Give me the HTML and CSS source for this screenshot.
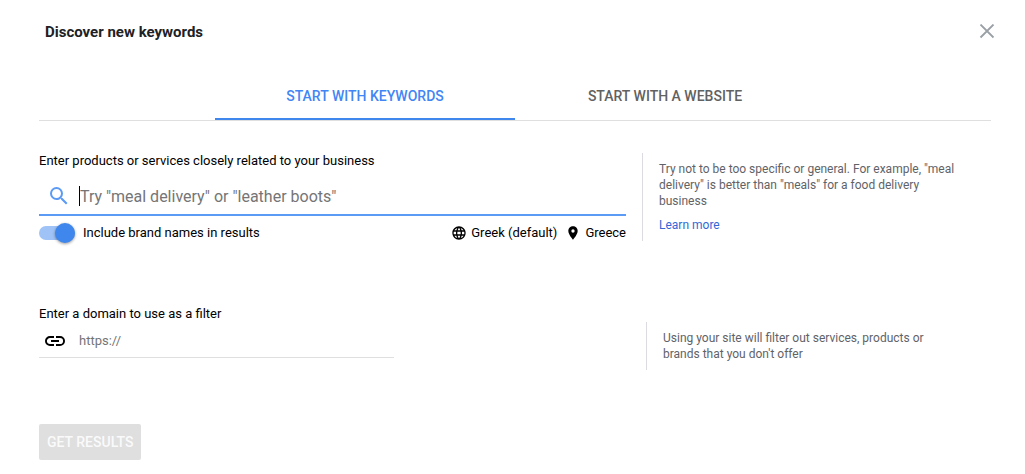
FILE: index.html
```html
<!DOCTYPE html>
<html lang="en">

<head>
    <meta charset="UTF-8">
    <meta name="viewport" content="width=device-width, initial-scale=1.0">
    <title>Discover new keywords</title>
    <link rel="stylesheet" href="styles.css">
</head>

<body>
    <header class="header">
        <h1 class="title">Discover new keywords</h1>
        <button class="close" type="button" aria-label="Close">
            <svg width="16" height="16" viewBox="0 0 16 16"><path d="M1.5 .5l13 13M14.5 .5l-13 13" fill="none" stroke="#9aa0a6" stroke-width="1.8"/></svg>
        </button>
    </header>

    <nav class="tabs" role="tablist">
        <button class="tab active" type="button" role="tab" aria-selected="true">START WITH KEYWORDS</button>
        <button class="tab" type="button" role="tab" aria-selected="false">START WITH A WEBSITE</button>
    </nav>

    <form class="form">
        <section class="row">
            <div class="main">
                <label class="label" for="keywords">Enter products or services closely related to your business</label>
                <div class="field search">
                    <svg class="search-icon" width="24" height="24" viewBox="0 0 24 24" fill="#5b9af5"><path d="M15.5 14h-.79l-.28-.27A6.471 6.471 0 0 0 16 9.5 6.5 6.5 0 1 0 9.5 16c1.61 0 3.09-.59 4.23-1.57l.27.28v.79l5 4.99L20.49 19l-4.99-5zm-6 0C7.01 14 5 11.99 5 9.5S7.01 5 9.5 5 14 7.01 14 9.5 11.99 14 9.5 14z"/></svg>
                    <span class="caret"></span>
                    <input id="keywords" type="text" placeholder="Try &quot;meal delivery&quot; or &quot;leather boots&quot;">
                </div>
                <div class="options">
                    <label class="brands"><input class="switch" type="checkbox" checked>Include brand names in results</label>
                    <button class="option" type="button">
                        <svg width="16" height="16" viewBox="0 0 24 24"><path d="M11.99 2C6.47 2 2 6.48 2 12s4.47 10 9.99 10C17.52 22 22 17.52 22 12S17.52 2 11.99 2zm6.93 6h-2.95a15.65 15.65 0 0 0-1.38-3.56A8.03 8.03 0 0 1 18.92 8zM12 4.04c.83 1.2 1.48 2.53 1.91 3.96h-3.82c.43-1.43 1.08-2.76 1.91-3.96zM4.26 14C4.1 13.36 4 12.69 4 12s.1-1.36.26-2h3.38c-.08.66-.14 1.32-.14 2 0 .68.06 1.34.14 2H4.26zm.82 2h2.95c.32 1.25.78 2.45 1.38 3.56A7.987 7.987 0 0 1 5.08 16zm2.95-8H5.08a7.987 7.987 0 0 1 4.33-3.56A15.65 15.65 0 0 0 8.03 8zM12 19.96c-.83-1.2-1.48-2.53-1.91-3.96h3.82c-.43 1.43-1.08 2.76-1.91 3.96zM14.34 14H9.66c-.09-.66-.16-1.32-.16-2 0-.68.07-1.35.16-2h4.68c.09.65.16 1.32.16 2 0 .68-.07 1.34-.16 2zm.25 5.56c.6-1.11 1.06-2.31 1.38-3.56h2.95a8.03 8.03 0 0 1-4.33 3.56zM16.36 14c.08-.66.14-1.32.14-2 0-.68-.06-1.34-.14-2h3.38c.16.64.26 1.31.26 2s-.1 1.36-.26 2h-3.38z"/></svg>
                        Greek (default)
                    </button>
                    <button class="option" type="button">
                        <svg width="16" height="16" viewBox="0 0 24 24"><path d="M12 2C8.13 2 5 5.13 5 9c0 5.25 7 13 7 13s7-7.75 7-13c0-3.87-3.13-7-7-7zm0 9.5a2.5 2.5 0 0 1 0-5 2.5 2.5 0 0 1 0 5z"/></svg>
                        Greece
                    </button>
                </div>
            </div>
            <aside class="tip">
                <p>Try not to be too specific or general. For example, "meal delivery" is better than "meals" for a food delivery business</p>
                <a href="#">Learn more</a>
            </aside>
        </section>

        <section class="row filter">
            <div class="main">
                <label class="label" for="domain">Enter a domain to use as a filter</label>
                <div class="field domain">
                    <svg width="24" height="24" viewBox="0 0 24 24"><path d="M3.9 12c0-1.71 1.39-3.1 3.1-3.1h4V7H7a5 5 0 0 0 0 10h4v-1.9H7c-1.71 0-3.1-1.39-3.1-3.1zM8 13h8v-2H8v2zm9-6h-4v1.9h4a3.1 3.1 0 0 1 0 6.2h-4V17h4a5 5 0 0 0 0-10z"/></svg>
                    <input id="domain" type="text" placeholder="https://">
                </div>
            </div>
            <aside class="tip">
                <p>Using your site will filter out services, products or brands that you don't offer</p>
            </aside>
        </section>

        <button class="submit" type="submit" disabled>GET RESULTS</button>
    </form>
</body>

</html>
```
FILE: styles.css
```css
* {
    box-sizing: border-box;
}

body {
    margin: 0;
    padding: 16px 34px 14px 39px;
    background: #fff;
    color: #000;
    font-family: Roboto, Arial, sans-serif;
    font-size: 13px;
    line-height: 16px;
}

button,
input {
    padding: 0;
    border: 0;
    background: none;
    color: inherit;
    font: inherit;
}

svg {
    display: block;
    flex: none;
}

.header {
    display: flex;
    align-items: center;
    justify-content: space-between;
    height: 32px;
    padding-left: 6px;
}

.title {
    margin: 0;
    color: #202124;
    font-size: 15px;
    font-weight: 700;
}

.close {
    padding: 8px;
    margin-right: -12px;
}

.tabs {
    display: flex;
    justify-content: center;
    margin-top: 24px;
    border-bottom: 1px solid #dfdfdf;
}

.tab {
    width: 300px;
    height: 48px;
    padding-top: 2px;
    border-bottom: 2px solid transparent;
    color: #616161;
    font-size: 14px;
    font-weight: 500;
}

.tab.active {
    border-color: #3f87ec;
    color: #4285f4;
}

.row {
    display: grid;
    grid-template-columns: minmax(0, 1fr) 349px;
    column-gap: 16px;
    padding-top: 32px;
}

.label {
    display: block;
}

.field {
    display: flex;
    align-items: center;
}

.field input {
    flex: 1;
    min-width: 0;
    outline: none;
}

.field input::placeholder {
    color: #757575;
    opacity: 1;
}

.search {
    height: 47px;
    padding: 15px 0 6px 8px;
    border-bottom: 2px solid #5b9af5;
    font-size: 16px;
}

.caret {
    width: 1px;
    height: 20px;
    margin-left: 8px;
    background: #000;
}

.search input {
    height: 24px;
}

.options {
    display: flex;
    align-items: center;
    gap: 8px;
    height: 34px;
}

.brands {
    display: flex;
    align-items: center;
    gap: 8px;
    margin-right: auto;
}

.switch {
    appearance: none;
    display: flex;
    align-items: center;
    justify-content: flex-end;
    width: 36px;
    height: 14px;
    margin: 0;
    border-radius: 7px;
    background: #9fc3f6;
}

.switch::before {
    content: "";
    width: 20px;
    height: 20px;
    border-radius: 50%;
    background: #3f87ec;
    box-shadow: 0 1px 3px rgba(0, 0, 0, .4);
}

.switch:not(:checked) {
    justify-content: flex-start;
    background: #bdbdbd;
}

.option {
    display: flex;
    align-items: center;
    gap: 4px;
}

.tip {
    align-self: start;
    padding: 8px 32px 8px 16px;
    border-left: 1px solid #dadce0;
    color: #5f6368;
    font-size: 12px;
}

.tip p {
    margin: 0;
}

.tip a {
    display: block;
    margin-top: 8px;
    color: #3367d6;
    text-decoration: none;
}

.filter {
    grid-template-columns: minmax(0, 1fr) 345px;
    padding-top: 56px;
}

.filter .tip {
    margin-top: 16px;
}

.domain {
    width: 60%;
    height: 36px;
    padding-top: 2px;
    padding-left: 4px;
    gap: 12px;
    border-bottom: 1px solid #dfdfdf;
}

.submit {
    height: 36px;
    margin-top: 54px;
    padding: 0 8px;
    border-radius: 2px;
    background: #dfdfdf;
    color: #fafafa;
    font-size: 14px;
    font-weight: 500;
}
```
